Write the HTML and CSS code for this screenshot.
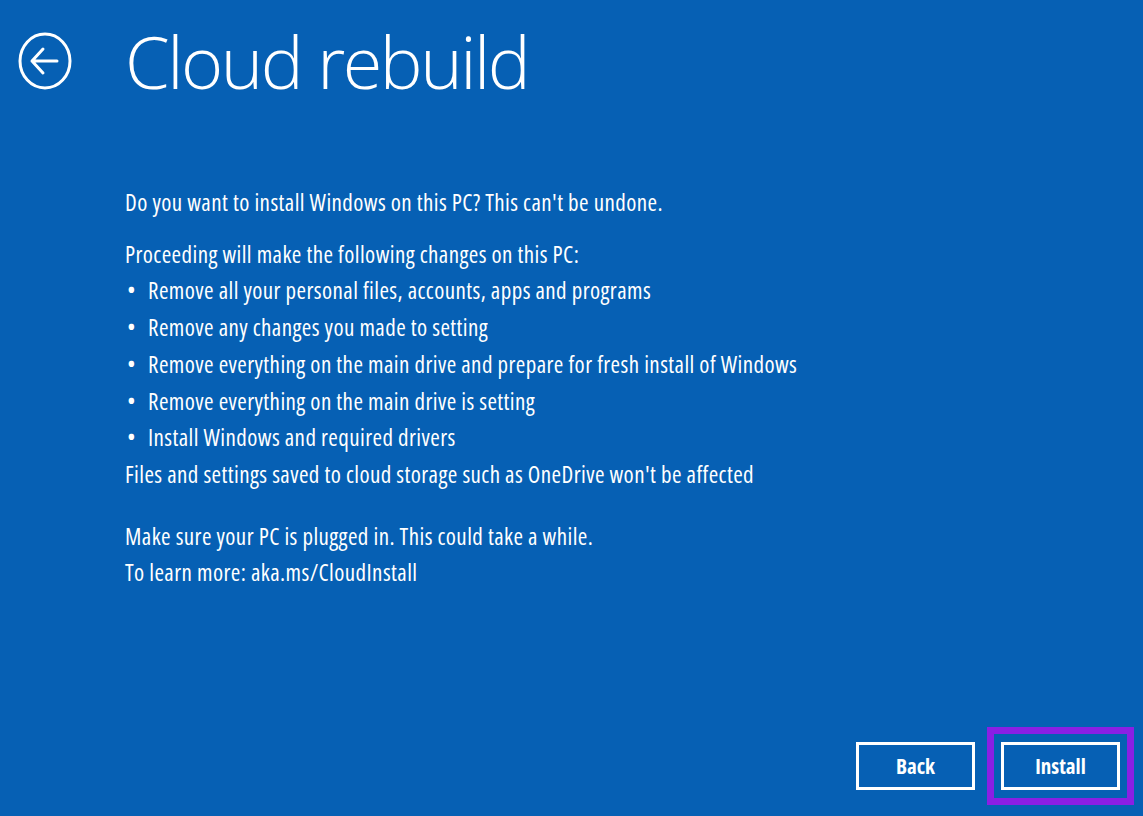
FILE: index.html
```html
<!DOCTYPE html>
<html lang="en">
<head>
    <meta charset="UTF-8">
    <meta name="viewport" content="width=device-width, initial-scale=1.0">
    <title>Cloud rebuild</title>
    <link rel="stylesheet" href="styles.css">
</head>
<body>
    <div class="screen">
        <div class="header">
            <button class="back-arrow" aria-label="Back">
                <svg width="54" height="58" viewBox="0 0 54 58">
                    <ellipse cx="27" cy="29" rx="25" ry="27" fill="none" stroke="#fff" stroke-width="3"/>
                    <path d="M14 29 H39 M25 17 L14 29 L25 41" fill="none" stroke="#fff" stroke-width="3" stroke-linecap="round" stroke-linejoin="round"/>
                </svg>
            </button>
            <h1>Cloud rebuild</h1>
        </div>

        <div class="content">
            <p class="question">Do you want to install Windows on this PC? This can't be undone.</p>
            <p>Proceeding will make the following changes on this PC:</p>
            <ul>
                <li>Remove all your personal files, accounts, apps and programs</li>
                <li>Remove any changes you made to setting</li>
                <li>Remove everything on the main drive and prepare for fresh install of Windows</li>
                <li>Remove everything on the main drive is setting</li>
                <li>Install Windows and required drivers</li>
            </ul>
            <p>Files and settings saved to cloud storage such as OneDrive won't be affected</p>
            <p class="gap">Make sure your PC is plugged in. This could take a while.</p>
            <p>To learn more: aka.ms/CloudInstall</p>
        </div>

        <div class="actions">
            <button class="btn">Back</button>
            <div class="highlight">
                <button class="btn">Install</button>
            </div>
        </div>
    </div>
</body>
</html>
```

FILE: styles.css
```css
body {
    margin: 0;
    background-color: #0660b4;
    color: #fff;
    font-family: "Open Sans", "Noto Sans", sans-serif;
    height: 100vh;
    overflow: hidden;
}

.screen {
    height: 100%;
    display: flex;
    flex-direction: column;
    box-sizing: border-box;
}

.header {
    display: flex;
    align-items: center;
    padding: 16px 0 0 18px;
    height: 90px;
}

.back-arrow {
    background: none;
    border: none;
    padding: 0;
    width: 54px;
    height: 58px;
    margin-right: 53px;
    cursor: pointer;
}

h1 {
    margin: 0;
    font-weight: 300;
    font-size: 72px;
    letter-spacing: -2.5px;
    line-height: 1;
}

.content {
    padding: 78px 0 0 125px;
    font-size: 23px;
    font-stretch: condensed;
    letter-spacing: 0.42px;
}

.content p {
    margin: 0;
    line-height: 36.7px;
}

.content .question {
    margin-bottom: 15px;
}

.content .gap {
    margin-top: 25px;
}

ul {
    list-style: none;
    margin: 0;
    padding: 0;
}

li {
    line-height: 36.7px;
    position: relative;
    padding-left: 23px;
}

li::before {
    content: "\2022";
    position: absolute;
    left: 2px;
}

.actions {
    margin-top: auto;
    display: flex;
    justify-content: flex-end;
    align-items: center;
    gap: 12px;
    padding: 0 9px 11px 0;
}

.btn {
    width: 119px;
    height: 48px;
    background: transparent;
    border: 3px solid #fff;
    color: #fff;
    font-family: "Open Sans", "Noto Sans", sans-serif;
    font-size: 21px;
    font-weight: 700;
    font-stretch: condensed;
    cursor: pointer;
}

.highlight {
    border: 7px solid #8a1fe4;
    padding: 8px 7px;
}
```
